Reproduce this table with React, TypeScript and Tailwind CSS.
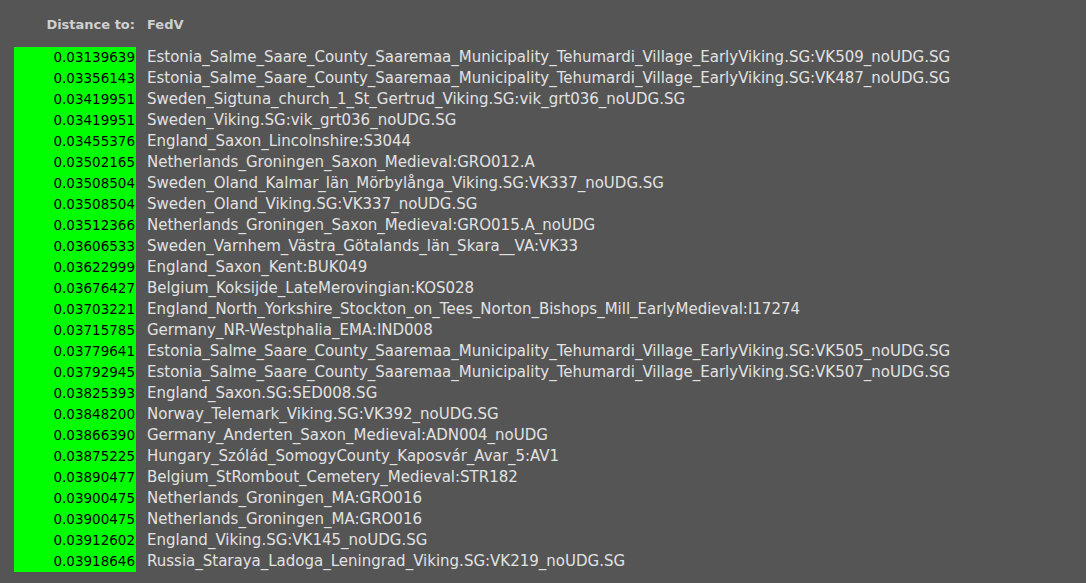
const rows: [string, string][] = [
  ["0.03139639", "Estonia_Salme_Saare_County_Saaremaa_Municipality_Tehumardi_Village_EarlyViking.SG:VK509_noUDG.SG"],
  ["0.03356143", "Estonia_Salme_Saare_County_Saaremaa_Municipality_Tehumardi_Village_EarlyViking.SG:VK487_noUDG.SG"],
  ["0.03419951", "Sweden_Sigtuna_church_1_St_Gertrud_Viking.SG:vik_grt036_noUDG.SG"],
  ["0.03419951", "Sweden_Viking.SG:vik_grt036_noUDG.SG"],
  ["0.03455376", "England_Saxon_Lincolnshire:S3044"],
  ["0.03502165", "Netherlands_Groningen_Saxon_Medieval:GRO012.A"],
  ["0.03508504", "Sweden_Oland_Kalmar_län_Mörbylånga_Viking.SG:VK337_noUDG.SG"],
  ["0.03508504", "Sweden_Oland_Viking.SG:VK337_noUDG.SG"],
  ["0.03512366", "Netherlands_Groningen_Saxon_Medieval:GRO015.A_noUDG"],
  ["0.03606533", "Sweden_Varnhem_Västra_Götalands_län_Skara__VA:VK33"],
  ["0.03622999", "England_Saxon_Kent:BUK049"],
  ["0.03676427", "Belgium_Koksijde_LateMerovingian:KOS028"],
  ["0.03703221", "England_North_Yorkshire_Stockton_on_Tees_Norton_Bishops_Mill_EarlyMedieval:I17274"],
  ["0.03715785", "Germany_NR-Westphalia_EMA:IND008"],
  ["0.03779641", "Estonia_Salme_Saare_County_Saaremaa_Municipality_Tehumardi_Village_EarlyViking.SG:VK505_noUDG.SG"],
  ["0.03792945", "Estonia_Salme_Saare_County_Saaremaa_Municipality_Tehumardi_Village_EarlyViking.SG:VK507_noUDG.SG"],
  ["0.03825393", "England_Saxon.SG:SED008.SG"],
  ["0.03848200", "Norway_Telemark_Viking.SG:VK392_noUDG.SG"],
  ["0.03866390", "Germany_Anderten_Saxon_Medieval:ADN004_noUDG"],
  ["0.03875225", "Hungary_Szólád_SomogyCounty_Kaposvár_Avar_5:AV1"],
  ["0.03890477", "Belgium_StRombout_Cemetery_Medieval:STR182"],
  ["0.03900475", "Netherlands_Groningen_MA:GRO016"],
  ["0.03900475", "Netherlands_Groningen_MA:GRO016"],
  ["0.03912602", "England_Viking.SG:VK145_noUDG.SG"],
  ["0.03918646", "Russia_Staraya_Ladoga_Leningrad_Viking.SG:VK219_noUDG.SG"],
];

export default function App() {
  return (
    <div className="w-[1086px] h-[583px] bg-[#555555] font-['DejaVu_Sans',sans-serif] overflow-hidden">
      <div className="pl-[14px] pt-[14px]">
        {/* header */}
        <div className="flex h-[22px] items-center font-bold text-[13px] text-[#d0d0d0]">
          <div className="w-[122px] text-right pr-[1px]">Distance to:</div>
          <div className="pl-[11px]">FedV</div>
        </div>
        <div className="h-[11px]" />
        {rows.map(([d, name], i) => (
          <div key={i} className="flex h-[21px] items-center">
            <div className="w-[122px] h-full bg-[#00ff00] text-black text-[13.5px] text-right pr-[1px] leading-[21px]">
              {d}
            </div>
            <div className="pl-[11px] text-[15px] text-[#e2e2e2] whitespace-nowrap">{name}</div>
          </div>
        ))}
      </div>
    </div>
  );
}
